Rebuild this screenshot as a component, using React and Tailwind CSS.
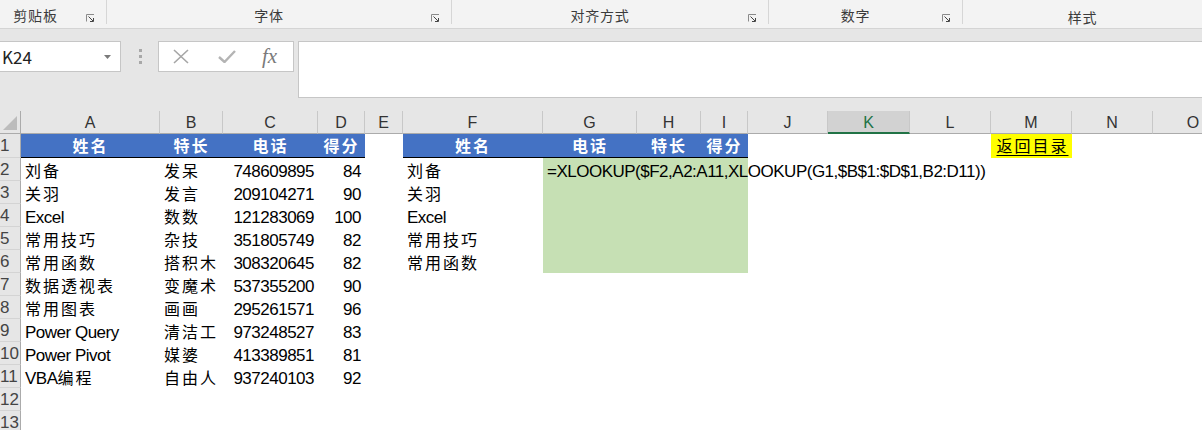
import React from "react";

const CJK = /([\u3000-\u9fff\uff00-\uffef]+)/;

function Txt({ t }) {
  return t.split(CJK).map((s, i) =>
    CJK.test(s) ? (
      <span key={i} className="font-['Noto_Sans_CJK_SC',sans-serif] text-[16px] tracking-[2px]">
        {s}
      </span>
    ) : s ? (
      <span key={i} className="font-['Liberation_Sans','Noto_Sans_CJK_SC',sans-serif] text-[17px] tracking-[-0.5px]">
        {s}
      </span>
    ) : null
  );
}

const LETTERS = ["A", "B", "C", "D", "E", "F", "G", "H", "I", "J", "K", "L", "M", "N", "O"];

const DATA = [
  ["刘备", "发呆", "748609895", "84"],
  ["关羽", "发言", "209104271", "90"],
  ["Excel", "数数", "121283069", "100"],
  ["常用技巧", "杂技", "351805749", "82"],
  ["常用函数", "搭积木", "308320645", "82"],
  ["数据透视表", "变魔术", "537355200", "90"],
  ["常用图表", "画画", "295261571", "96"],
  ["Power Query", "清洁工", "973248527", "83"],
  ["Power Pivot", "媒婆", "413389851", "81"],
  ["VBA编程", "自由人", "937240103", "92"],
];
const FNAMES = ["刘备", "关羽", "Excel", "常用技巧", "常用函数"];

function Launcher() {
  return (
    <svg width="9" height="8" viewBox="0 0 9 8" className="shrink-0">
      <path d="M0.5 7.5V0.5H8" fill="none" stroke="#8a8a8a" strokeWidth="1" />
      <path d="M2.5 2.5L7 7M7.5 4V7.5H4" fill="none" stroke="#444" strokeWidth="1" />
    </svg>
  );
}

function Group({ label, w, launcher = true, extra = "" }) {
  return (
    <div className={`flex h-[24px] items-center border-r border-[#d6d6d6] ${w} ${extra}`}>
      <div className="flex flex-1 justify-center pt-[7px] text-[14px] tracking-[0.8px] text-[#3b3b3b]">
        {label}
      </div>
      {launcher && (
        <div className="flex w-[20px] justify-start pt-[12px]">
          <Launcher />
        </div>
      )}
    </div>
  );
}

function RowHeader({ n, h = "h-[23px]" }) {
  return (
    <div
      className={`${h} overflow-hidden border-r border-b border-r-[#ababab] border-b-[#d4d4d4] bg-[#e6e6e6] pt-[2px] font-['Liberation_Sans',sans-serif] leading-[20px] text-[17px] text-[#444]`}
    >
      {n}
    </div>
  );
}

function TextCell({ t, right = false, extra = "" }) {
  return (
    <div
      className={`h-[23px] min-w-0 whitespace-nowrap pt-[2px] leading-[21px] text-black ${
        right ? "pr-[4px] text-right" : "pl-[4px]"
      } ${extra}`}
    >
      {t ? <Txt t={t} /> : null}
    </div>
  );
}

function HeadCell({ t }) {
  return (
    <div className="h-[24px] border-b border-black bg-[#4472c4] text-center font-bold leading-[23px] text-white">
      <Txt t={t} />
    </div>
  );
}

function Empty({ h = "h-[23px]" }) {
  return <div className={h} />;
}

export default function App() {
  const cells = [];

  cells.push(
    <div
      key="corner"
      className="relative h-[23px] border-r border-b border-[#ababab] bg-[#e6e6e6]"
    >
      <svg width="21" height="23" viewBox="0 0 21 23" className="absolute left-0 top-0">
        <polygon points="17,5 17,19 3,19" fill="#bcbcbc" />
      </svg>
    </div>
  );
  LETTERS.forEach((l) => {
    const sel = l === "K";
    cells.push(
      <div
        key={"h" + l}
        className={`h-[23px] border-r font-['Liberation_Sans',sans-serif] text-[16px] text-center pt-[1px] leading-[21px] ${
          sel
            ? "border-r-[#c8c8c8] border-b-2 border-b-[#217346] bg-[#d2d2d2] text-[#217346]"
            : "border-r-[#c8c8c8] border-b border-b-[#ababab] bg-[#e6e6e6] text-[#333]"
        }`}
      >
        {l}
      </div>
    );
  });

  cells.push(<RowHeader key="r1" n={1} h="h-[24px]" />);
  ["姓名", "特长", "电话", "得分"].forEach((t, i) => cells.push(<HeadCell key={"a" + i} t={t} />));
  cells.push(<Empty key="r1e" h="h-[24px]" />);
  ["姓名", "电话", "特长", "得分"].forEach((t, i) => cells.push(<HeadCell key={"f" + i} t={t} />));
  cells.push(<Empty key="r1j" h="h-[24px]" />);
  cells.push(<Empty key="r1k" h="h-[24px]" />);
  cells.push(<Empty key="r1l" h="h-[24px]" />);
  cells.push(
    <div
      key="r1m"
      className="h-[24px] bg-[#ffff00] pl-[2px] text-center leading-[23px] text-[16px] tracking-[2px] text-black underline underline-offset-[3px]"
    >
      返回目录
    </div>
  );
  cells.push(<Empty key="r1n" h="h-[24px]" />);
  cells.push(<Empty key="r1o" h="h-[24px]" />);

  for (let r = 2; r <= 13; r++) {
    const d = DATA[r - 2];
    cells.push(<RowHeader key={"rh" + r} n={r} />);
    cells.push(<TextCell key={"A" + r} t={d ? d[0] : ""} />);
    cells.push(<TextCell key={"B" + r} t={d ? d[1] : ""} />);
    cells.push(<TextCell key={"C" + r} t={d ? d[2] : ""} right />);
    cells.push(<TextCell key={"D" + r} t={d ? d[3] : ""} right />);
    cells.push(<Empty key={"E" + r} />);
    cells.push(<TextCell key={"F" + r} t={r <= 6 ? FNAMES[r - 2] : ""} />);
    if (r <= 6) {
      cells.push(
        <div
          key={"G" + r}
          className="col-span-3 h-[23px] min-w-0 whitespace-nowrap bg-[#c6e0b4] pl-[4px] pt-[2px] leading-[21px] text-black"
        >
          {r === 2 ? <Txt t="=XLOOKUP($F2,A2:A11,XLOOKUP(G1,$B$1:$D$1,B2:D11))" /> : null}
        </div>
      );
    } else {
      cells.push(<Empty key={"G" + r} />);
      cells.push(<Empty key={"H" + r} />);
      cells.push(<Empty key={"I" + r} />);
    }
    ["J", "K", "L", "M", "N", "O"].forEach((c) => cells.push(<Empty key={c + r} />));
  }

  return (
    <div className="relative h-[430px] w-[1202px] overflow-hidden bg-white font-['Noto_Sans_CJK_SC',sans-serif]">
      <div className="flex h-[29px] border-b border-[#d4d4d4] bg-[#f3f3f3]">
        <Group label="剪贴板" w="w-[122px]" extra="-ml-[15px]" />
        <Group label="字体" w="w-[345px]" />
        <Group label="对齐方式" w="w-[317px]" />
        <Group label="数字" w="w-[194px]" />
        <div className="flex h-[24px] flex-1 justify-center pt-[7px] text-[14px] tracking-[0.8px] text-[#3b3b3b]">
          样式
        </div>
      </div>

      <div className="flex h-[82px] items-start bg-[#e6e6e6] pt-[12px]">
        <div className="-ml-px flex h-[31px] w-[122px] items-center border border-[#c6c6c6] bg-white">
          <span className="pl-[2px] text-[17px] text-[#222]">K24</span>
          <div className="flex-1" />
          <svg width="7" height="4" viewBox="0 0 7 4" className="mr-[9px]">
            <polygon points="0,0 7,0 3.5,4" fill="#7a7a7a" />
          </svg>
        </div>
        <div className="flex h-[31px] w-[37px] flex-col items-center justify-center gap-[3px] pl-[1px]">
          <div className="h-[3px] w-[3px] bg-[#a8a8a8]" />
          <div className="h-[3px] w-[3px] bg-[#a8a8a8]" />
          <div className="h-[3px] w-[3px] bg-[#a8a8a8]" />
        </div>
        <div className="flex h-[31px] w-[136px] items-center border border-[#c6c6c6] bg-white">
          <svg width="16" height="15" viewBox="0 0 16 15" className="ml-[14px]">
            <path d="M1 1L15 14M15 1L1 14" stroke="#a6a6a6" strokeWidth="1.6" fill="none" />
          </svg>
          <svg width="18" height="13" viewBox="0 0 18 13" className="ml-[29px]">
            <path d="M1 7L6.5 12L17 1" stroke="#b4b4b4" strokeWidth="2.4" fill="none" />
          </svg>
          <span className="ml-[26px] font-['Liberation_Serif',serif] text-[21px] italic leading-none text-[#7a7a7a]">
            fx
          </span>
        </div>
        <div className="ml-[4px] h-[57px] flex-1 border-y border-l border-[#c6c6c6] bg-white" />
      </div>

      <div className="grid grid-cols-[21px_139px_63px_95px_47px_38px_140px_94px_64px_47px_80px_82px_81px_81px_81px_81px]">
        {cells}
      </div>
    </div>
  );
}
